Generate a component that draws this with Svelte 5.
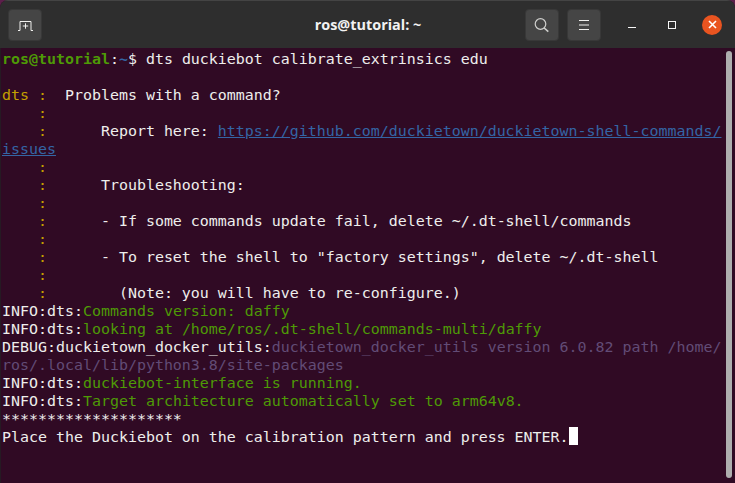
<script>
    const WHITE = "w", YELLOW = "y", GREEN = "g", DIM = "d", LINK = "l";

    const rows = [
        [["ros@tutorial", "pg"], [":", WHITE], ["~", "pb"], ["$ dts duckiebot calibrate_extrinsics edu", WHITE]],
        [],
        [["dts :", YELLOW], ["  Problems with a command?", WHITE]],
        [["    :", YELLOW]],
        [["    :", YELLOW], ["      Report here: ", WHITE], ["https://github.com/duckietown/duckietown-shell-commands/", LINK]],
        [["issues", LINK]],
        [["    :", YELLOW]],
        [["    :", YELLOW], ["      Troubleshooting:", WHITE]],
        [["    :", YELLOW]],
        [["    :", YELLOW], ["      - If some commands update fail, delete ~/.dt-shell/commands", WHITE]],
        [["    :", YELLOW]],
        [["    :", YELLOW], ["      - To reset the shell to \"factory settings\", delete ~/.dt-shell", WHITE]],
        [["    :", YELLOW]],
        [["    :", YELLOW], ["        (Note: you will have to re-configure.)", WHITE]],
        [["INFO:dts:", WHITE], ["Commands version: daffy", GREEN]],
        [["INFO:dts:", WHITE], ["looking at /home/ros/.dt-shell/commands-multi/daffy", GREEN]],
        [["DEBUG:duckietown_docker_utils:", WHITE], ["duckietown_docker_utils version 6.0.82 path /home/", DIM]],
        [["ros/.local/lib/python3.8/site-packages", DIM]],
        [["INFO:dts:", WHITE], ["duckiebot-interface is running.", GREEN]],
        [["INFO:dts:", WHITE], ["Target architecture automatically set to arm64v8.", GREEN]],
        [["********************", WHITE]],
        [["Place the Duckiebot on the calibration pattern and press ENTER.", WHITE]],
    ];
</script>

<div class="window">
    <header class="titlebar">
        <div class="side">
            <button class="tool" aria-label="New tab">
                <svg width="16" height="12" viewBox="0 0 16 12"><path d="M1 11.5 H3 V2.5 H14 V11.5 H16 M8.5 4.3 V9.7 M5.8 7 H11.2" fill="none" stroke="#f0f0ee" stroke-width="1"/></svg>
            </button>
        </div>
        <div class="title">ros@tutorial: ~</div>
        <div class="side end">
            <button class="tool" aria-label="Search">
                <svg width="16" height="16" viewBox="0 0 16 16"><circle cx="6.5" cy="7" r="5.3" fill="none" stroke="#cfcfcd" stroke-width="1.2"/><path d="M10.2 11 L14.3 14.6" stroke="#cfcfcd" stroke-width="1.6"/></svg>
            </button>
            <button class="tool" aria-label="Menu">
                <svg width="10" height="10" viewBox="0 0 10 10"><path d="M0 0.5 H10 M0 5 H10 M0 9.5 H10" stroke="#f0f0ee" stroke-width="1"/></svg>
            </button>
            <div class="controls">
                <span class="ctl"><svg width="8" height="8" viewBox="0 0 8 8"><path d="M0 6.5 H8" stroke="#f6f6f6" stroke-width="1"/></svg></span>
                <span class="ctl"><svg width="8" height="8" viewBox="0 0 8 8"><rect x="0.5" y="0.5" width="7" height="7" fill="none" stroke="#f6f6f6" stroke-width="1"/></svg></span>
                <span class="ctl close">
                    <svg width="9" height="9" viewBox="0 0 9 9"><path d="M1 1 L8 8 M8 1 L1 8" stroke="#fff" stroke-width="1.6"/></svg>
                </span>
            </div>
        </div>
    </header>
    <div class="body">
        <pre class="term">{#each rows as row}<div class="row">{#each row as [text, tone]}<span class={tone}>{text}</span>{/each}{#if row === rows[rows.length - 1]}<span class="cursor"></span>{/if}</div>{/each}</pre>
        <div class="track"><div class="thumb"></div></div>
    </div>
</div>

<style>
    :global(body) {
        background: #5c1f4a;
    }

    .window {
        width: 735px;
        height: 483px;
        display: flex;
        flex-direction: column;
        overflow: hidden;
        background: #300a24;
        border-radius: 8px 8px 0 0;
    }

    .titlebar {
        height: 48px;
        flex: none;
        box-sizing: border-box;
        display: grid;
        grid-template-columns: 1fr auto 1fr;
        align-items: center;
        padding: 0 13px 0 8px;
        background: #2e2e2e;
        border-top: 1px solid #444;
    }

    .side {
        display: flex;
        align-items: center;
        gap: 8px;
    }

    .end {
        justify-content: flex-end;
    }

    .tool {
        width: 34px;
        height: 32px;
        padding: 0;
        display: flex;
        align-items: center;
        justify-content: center;
        background: #454545;
        border: 1px solid #383838;
        border-radius: 4px;
    }

    .title {
        padding-left: 6px;
        color: #f2f2f2;
        font: bold 14.4px "Open Sans", sans-serif;
    }

    .controls {
        display: flex;
        align-items: center;
        margin-left: 13px;
        gap: 20px;
    }

    .ctl {
        width: 20px;
        height: 20px;
        display: flex;
        align-items: center;
        justify-content: center;
    }

    .close {
        border-radius: 50%;
        background: #e95420;
    }

    .body {
        flex: 1;
        display: flex;
        min-height: 0;
        border-left: 1px solid #261a23;
    }

    .term {
        flex: 1;
        margin: 0;
        padding: 2px 0 0 1px;
        color: #eeeeec;
        font: 14.95px/18px "DejaVu Sans Mono", monospace;
    }

    .row {
        height: 18px;
        white-space: pre;
    }

    .cursor {
        display: inline-block;
        width: 9px;
        height: 18px;
        margin-top: -1px;
        vertical-align: top;
        background: #fff;
    }

    .y { color: #c4a000; }
    .g { color: #4e9a06; }
    .d { color: #624c76; }
    .l { color: #3465a4; text-decoration: underline; }
    .pg { color: #4e9a06; font-weight: bold; }
    .pb { color: #3465a4; font-weight: bold; }

    .track {
        width: 9px;
        flex: none;
        padding: 3px 0 5px;
        box-sizing: border-box;
    }

    .thumb {
        width: 6px;
        height: 100%;
        border-radius: 3px;
        background: #aeaeae;
    }
</style>
